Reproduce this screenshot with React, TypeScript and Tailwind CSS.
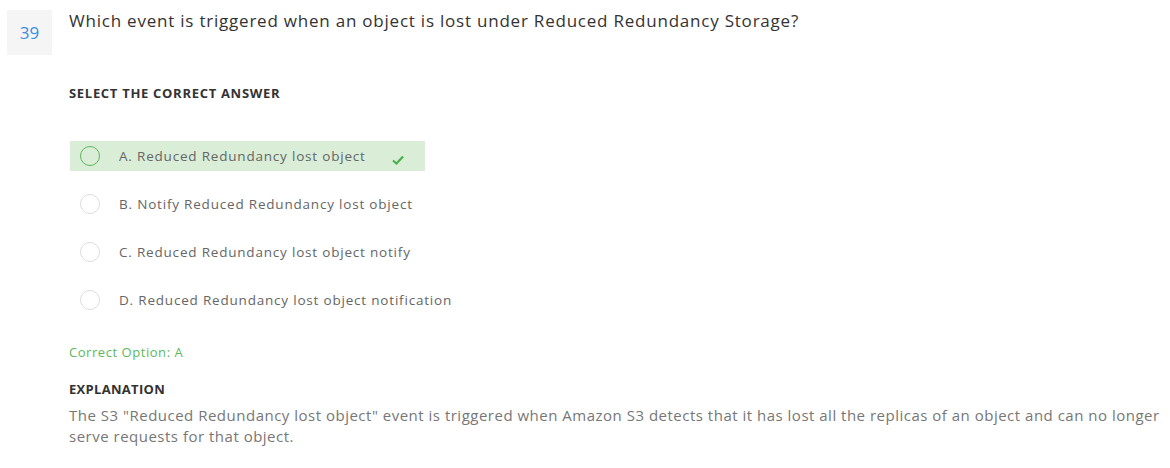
import React from 'react';

const options = [
    { key: 'A', text: 'Reduced Redundancy lost object', correct: true },
    { key: 'B', text: 'Notify Reduced Redundancy lost object', correct: false },
    { key: 'C', text: 'Reduced Redundancy lost object notify', correct: false },
    { key: 'D', text: 'Reduced Redundancy lost object notification', correct: false },
];

const App: React.FC = () => {
    return (
        <div className="w-[1170px] h-[468px] bg-white font-['Open_Sans',sans-serif] overflow-hidden">
            <div className="flex pt-[10px] pl-[7px]">
                <div className="w-[45px] h-[45px] bg-[#f5f5f5] flex items-center justify-center text-[17px] text-[#3a8ee6] shrink-0">
                    39
                </div>
                <div className="pl-[17px] flex-1">
                    <p className="text-[17px] leading-[22px] text-[#333] tracking-[0.78px]">
                        Which event is triggered when an object is lost under Reduced Redundancy Storage?
                    </p>
                    <p className="mt-[52px] text-[13px] font-bold text-[#333] leading-[18px] tracking-[0.7px]">SELECT THE CORRECT ANSWER</p>

                    <div className="mt-[39px] flex flex-col gap-[18px]">
                        {options.map((o) => (
                            <div
                                key={o.key}
                                className={`flex items-center h-[30px] w-[355px] ml-[1px] pl-[10px] whitespace-nowrap ${o.correct ? 'bg-[#d9edd7]' : ''}`}
                            >
                                <span
                                    className={`w-[20px] h-[20px] rounded-full border shrink-0 ${o.correct ? 'border-[#5cb85c]' : 'border-[#ddd] bg-white'}`}
                                />
                                <span className="ml-[19px] text-[13.5px] text-[#666] tracking-[0.8px]">
                                    {o.key}. {o.text}
                                </span>
                                {o.correct && (
                                    <svg className="ml-[26px] mt-[8px]" width="12" height="10" viewBox="0 0 12 10">
                                        <path d="M1 5.5 L4.5 8.5 L11 1.5" fill="none" stroke="#4caf50" strokeWidth="2.2" />
                                    </svg>
                                )}
                            </div>
                        ))}
                    </div>

                    <p className="mt-[28px] text-[13px] text-[#5cb85c] tracking-[0.55px]">Correct Option: A</p>
                    <p className="mt-[17px] text-[13px] font-bold text-[#333] tracking-[0.3px]">EXPLANATION</p>
                    <p className="mt-[6px] text-[15px] leading-[21px] text-[#777] tracking-[0.5px] pr-[4px]">
                        The S3 "Reduced Redundancy lost object" event is triggered when Amazon S3 detects that it has lost all the replicas of an object and can no longer serve requests for that object.
                    </p>
                </div>
            </div>
        </div>
    );
};

export default App;
